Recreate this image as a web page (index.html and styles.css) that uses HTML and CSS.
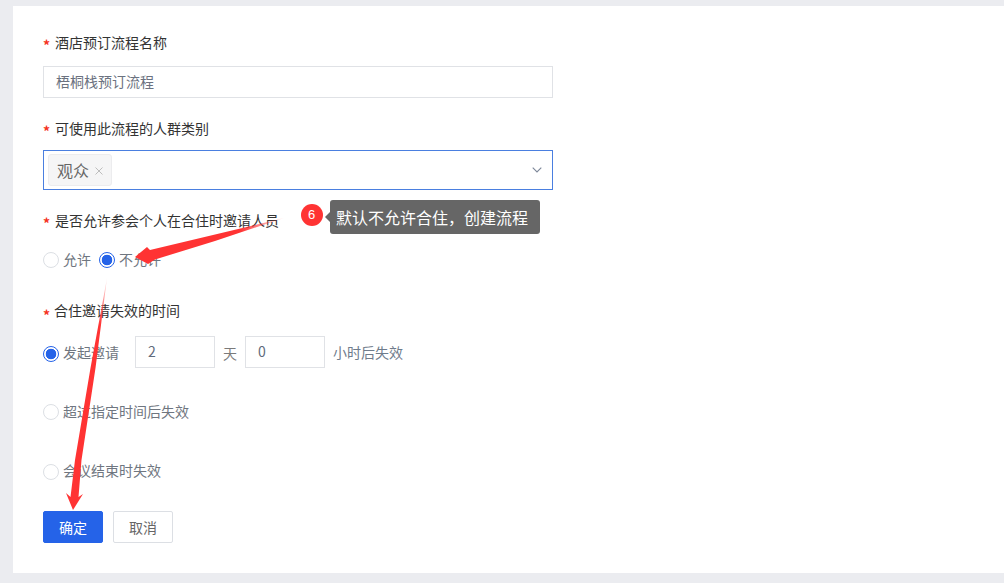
FILE: index.html
```html
<!DOCTYPE html>
<html lang="zh-CN">
<head>
<meta charset="utf-8">
<title>酒店预订流程</title>
<link rel="stylesheet" href="styles.css">
</head>
<body>
<main class="card">
  <div class="label gap-12"><span class="star">*</span>酒店预订流程名称</div>
  <div class="input wide mb-20">梧桐栈预订流程</div>

  <div class="label gap-10"><span class="star">*</span>可使用此流程的人群类别</div>
  <div class="select mb-20">
    <span class="tag">观众<svg class="tag-x" width="8" height="8" viewBox="0 0 8 8"><path d="M.5.5l7 7M7.5.5l-7 7" fill="none" stroke="#bdbdbd" stroke-width="1"/></svg></span>
    <svg class="chev" width="10" height="6" viewBox="0 0 10 6"><path d="M.7.7 5 5 9.3.7" fill="none" stroke="#7d8799" stroke-width="1.1"/></svg>
  </div>

  <div class="label gap-17"><span class="star">*</span>是否允许参会个人在合住时邀请人员</div>
  <div class="row mb-29">
    <span class="radio"></span><span class="opt">允许</span>
    <span class="radio on second"></span><span class="opt">不允许</span>
  </div>

  <div class="label tight gap-14"><span class="star low">*</span>合住邀请失效的时间</div>
  <div class="row tall mb-33">
    <span class="radio on drop"></span><span class="opt flat">发起邀请</span>
    <span class="input num first">2</span><span class="unit low">天</span>
    <span class="input num">0</span><span class="unit dim">小时后失效</span>
  </div>
  <div class="row mb-38"><span class="radio"></span><span class="opt">超过指定时间后失效</span></div>
  <div class="row mb-28"><span class="radio"></span><span class="opt raise">会议结束时失效</span></div>

  <div class="actions">
    <button class="btn primary">确定</button>
    <button class="btn">取消</button>
  </div>
</main>

<svg class="arrows" width="1004" height="583" viewBox="0 0 1004 583">
  <defs>
    <linearGradient id="fa" gradientUnits="userSpaceOnUse" x1="284" y1="218" x2="240" y2="230">
      <stop offset="0" stop-color="#ff3b3b" stop-opacity=".1"/><stop offset="1" stop-color="#ff3333"/>
    </linearGradient>
    <linearGradient id="fb" gradientUnits="userSpaceOnUse" x1="107" y1="278" x2="100" y2="325">
      <stop offset="0" stop-color="#ff3b3b" stop-opacity=".1"/><stop offset="1" stop-color="#ff3333"/>
    </linearGradient>
  </defs>
  <polygon fill="url(#fa)" points="284,218 150,250 147,247 135,257 148,264 155,259.5 215,241"/>
  <polygon fill="url(#fb)" points="107,278 90.5,368 75,460 70.5,497 66,493 73,510 83,494 78.5,497 81.5,460 95.5,368"/>
</svg>

<div class="badge">6</div>
<div class="tip">默认不允许合住，创建流程</div>
</body>
</html>
```
FILE: styles.css
```css
* { box-sizing: border-box; }
html, body { margin: 0; height: 583px; overflow: hidden; }
body {
  position: relative;
  background: #ebecf0;
  padding: 6px 0 10px 13px;
  font-family: "Noto Sans CJK SC", "Liberation Sans", sans-serif;
  font-size: 14px;
  color: #333;
}
.card { background: #fff; height: 567px; padding: 26px 0 30px 30px; }
.label { position: relative; height: 22px; line-height: 20px; padding-left: 12px; color: #333; font-size: 14px; }
.label.tight { padding-left: 11px; }
.star { position: absolute; left: 0; top: 2px; color: #f5321e; font-weight: 700; font-size: 14px; line-height: 22px; }
.star.low { top: 4px; }
.gap-10 { margin-bottom: 10px; }
.gap-12 { margin-bottom: 12px; }
.gap-14 { margin-bottom: 14px; }
.gap-17 { margin-bottom: 17px; }
.mb-20 { margin-bottom: 20px; }
.mb-28 { margin-bottom: 28px; }
.mb-29 { margin-bottom: 29px; }
.mb-33 { margin-bottom: 33px; }
.mb-38 { margin-bottom: 38px; }
.input {
  border: 1px solid #e0e2e6;
  background: #fff;
  height: 32px;
  line-height: 28px;
  padding-left: 12px;
  color: #6b7280;
  font-size: 14px;
}
.wide { width: 510px; }
.select {
  width: 510px; height: 40px;
  border: 1px solid #4a7fe0;
  display: flex; align-items: center; justify-content: space-between;
  padding: 0 10px 0 4px;
}
.tag {
  display: inline-flex; align-items: center;
  height: 32px; width: 64px;
  padding-left: 8px;
  background: #f5f5f6;
  border: 1px solid #ececee;
  border-radius: 3px;
  color: #666;
  font-size: 16px;
}
.tag-x { margin-left: 6px; margin-top: 1px; }
.row { display: flex; align-items: center; height: 22px; }
.row.tall { height: 32px; }
.radio {
  width: 16px; height: 16px;
  border: 1px solid #dcdfe4;
  border-radius: 50%;
  background: #fff;
  flex: none;
}
.radio.on {
  border-color: #2563e8;
  background: radial-gradient(circle, #2563e8 0 5px, #fff 5.6px);
}
.radio.second { margin-left: 8px; }
.radio.drop { margin-top: 4px; }
.opt { margin-left: 4px; padding-bottom: 2px; color: #6f7680; font-size: 14px; }
.opt.flat { padding-bottom: 0; }
.opt.raise { padding-bottom: 4px; }
.num { width: 80px; display: inline-block; color: #5f6b7c; }
.num.first { margin-left: 16px; }
.unit { margin: 0 8px; color: #7a7a7a; }
.unit.low { padding-top: 2px; }
.unit.dim { color: #6f7c8c; }
.actions { display: flex; gap: 10px; }
.btn {
  width: 60px; height: 32px; padding: 0;
  border: 1px solid #dcdfe4; border-radius: 2px;
  background: #fff; color: #666;
  font: 14px "Noto Sans CJK SC", "Liberation Sans", sans-serif;
}
.btn.primary { background: #2563e8; border-color: #2563e8; color: #fff; }
.arrows { position: absolute; left: 0; top: 0; pointer-events: none; }
.badge {
  position: absolute; left: 301px; top: 204px;
  width: 22px; height: 22px; border-radius: 50%;
  background: #ff3333; color: #fff;
  font: 13px/22px "Liberation Sans", sans-serif; text-align: center;
  padding-right: 1px;
}
.tip {
  position: absolute; left: 330px; top: 200px;
  width: 210px; height: 34px;
  background: #666; color: #fff;
  border-radius: 3px;
  font-size: 16px; line-height: 34px;
  padding-left: 6px;
  white-space: nowrap;
}
.tip::before {
  content: ""; position: absolute; left: -5px; top: 12px;
  border-style: solid; border-width: 5px 5px 5px 0;
  border-color: transparent #666 transparent transparent;
}
```
